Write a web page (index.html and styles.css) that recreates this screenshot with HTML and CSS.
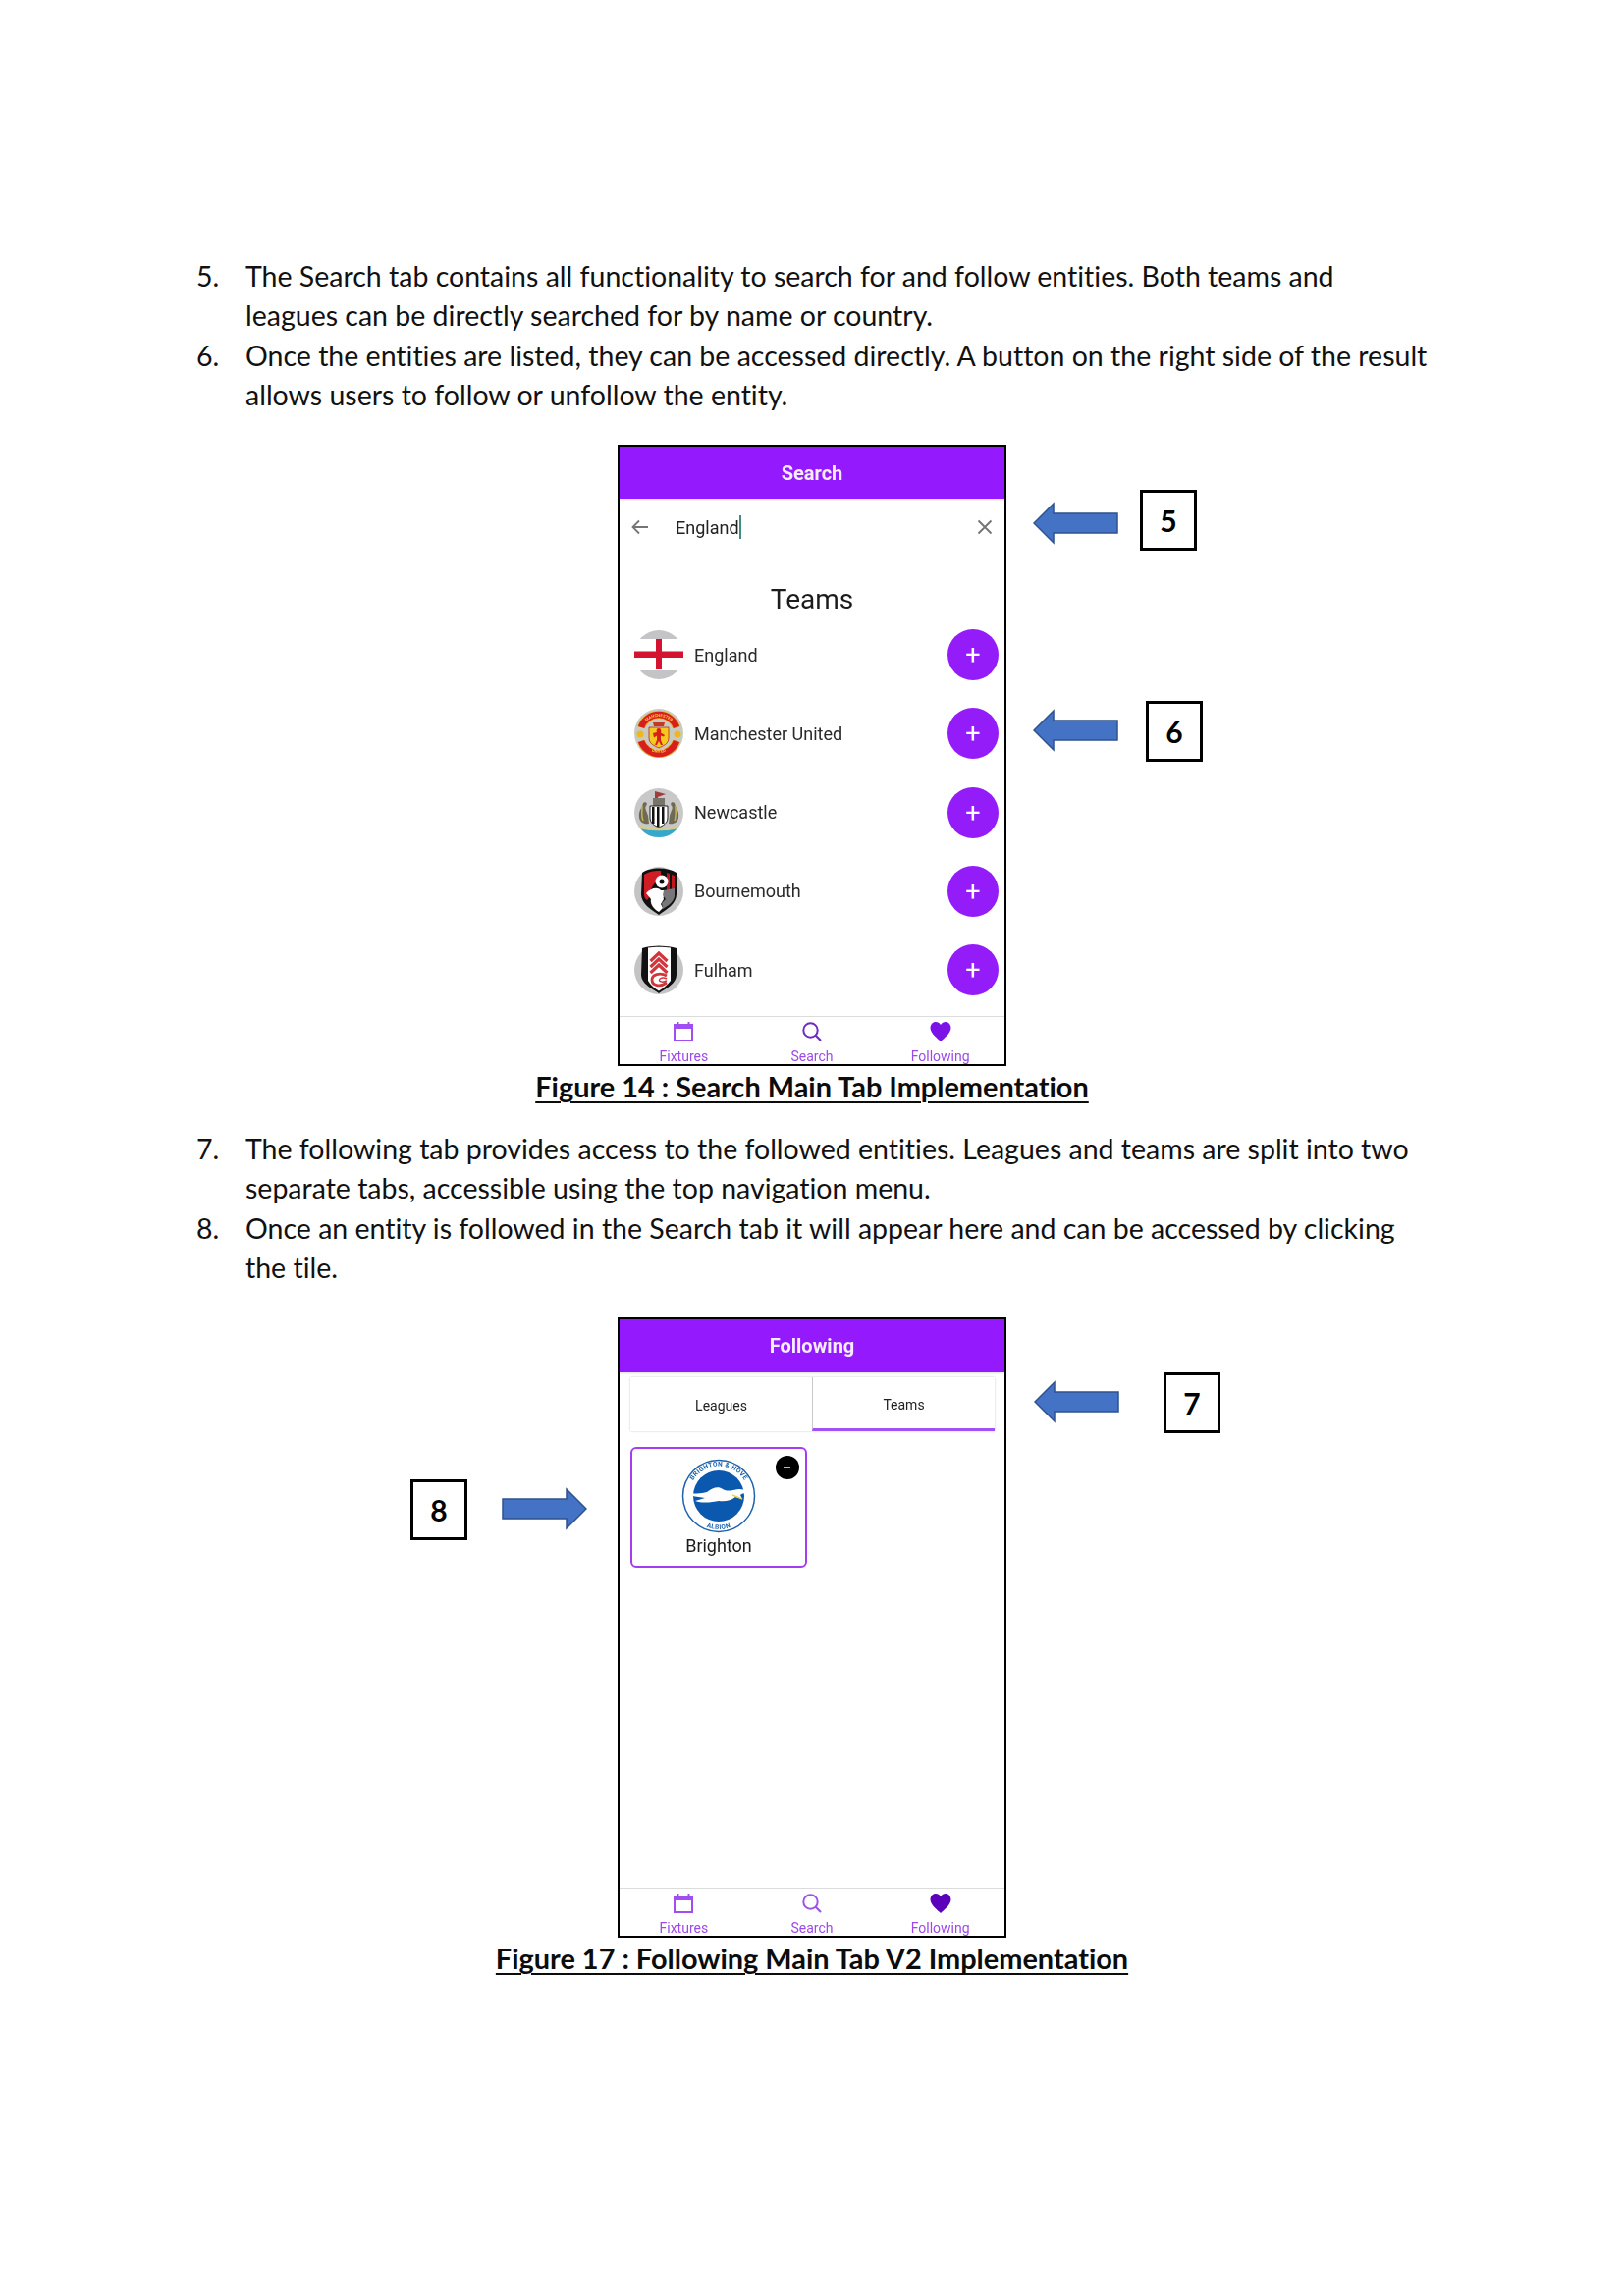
FILE: index.html
```html
<!DOCTYPE html>
<html lang="en">
<head>
    <meta charset="UTF-8">
    <meta name="viewport" content="width=device-width, initial-scale=1.0">
    <title>Search and Following Tabs</title>
    <link rel="stylesheet" href="styles.css">
</head>
<body>

    <div class="page">

        <ol class="steps">
            <li><span class="num">5.</span><p>The Search tab contains all functionality to search for and follow entities. Both teams and<br>leagues can be directly searched for by name or country.</p></li>
            <li><span class="num">6.</span><p>Once the entities are listed, they can be accessed directly. A button on the right side of the result<br>allows users to follow or unfollow the entity.</p></li>
        </ol>

        <figure class="figure">
            <div class="phone phone-search">
                <div class="app-header">Search</div>
                <div class="search-bar">
                    <svg class="bar-icon" width="18" height="16" viewBox="0 0 18 16"><path d="M17 8H2M8 1.5 1.5 8 8 14.5" fill="none" stroke="#757575" stroke-width="1.8"/></svg>
                    <span class="search-text">England</span><span class="caret"></span>
                    <svg class="close-icon" width="16" height="16" viewBox="0 0 16 16"><path d="M1.5 1.5 14.5 14.5M14.5 1.5 1.5 14.5" fill="none" stroke="#757575" stroke-width="1.9"/></svg>
                </div>
                <h3 class="list-title">Teams</h3>
                <div class="team-list">
                    <div class="team-row">
                        <svg class="crest" viewBox="0 0 50 50">
                            <circle cx="25" cy="25" r="25" fill="#c4c4c6"/>
                            <rect y="9" width="50" height="32" fill="#fff"/>
                            <rect x="0" y="21.500" width="50" height="6.500" fill="#d3132f"/>
                            <rect x="22" y="9" width="6" height="31" fill="#d3132f"/>
                        </svg>
                        <span class="team-name">England</span>
                        <span class="add-btn">+</span>
                    </div>
                    <div class="team-row">
                        <svg class="crest" viewBox="0 0 50 50">
                            <defs>
                                <path id="mu-top" d="M8 20A18 18 0 0 1 42 20"/>
                                <path id="mu-bottom" d="M6 32A20.500 20.500 0 0 0 44 32"/>
                            </defs>
                            <circle cx="25" cy="25" r="25" fill="#c9cabf"/>
                            <path d="M7 19A19 19 0 0 1 43 19" fill="none" stroke="#e8b41e" stroke-width="8"/>
                            <path d="M7 33A19 19 0 0 0 43 33" fill="none" stroke="#e8b41e" stroke-width="8"/>
                            <path d="M7 19A19 19 0 0 1 43 19" fill="none" stroke="#d81f1c" stroke-width="6.500"/>
                            <path d="M7 33A19 19 0 0 0 43 33" fill="none" stroke="#d81f1c" stroke-width="6.500"/>
                            <circle cx="6" cy="26" r="3.500" fill="#efb71e"/>
                            <circle cx="44" cy="26" r="3.500" fill="#efb71e"/>
                            <path d="M15 19H35V30C35 36 29 38 25 40 21 38 15 36 15 30Z" fill="#f4c81c" stroke="#b8281c" stroke-width=".8"/>
                            <path d="M19 14H31L30 18H20Z" fill="#c23a22"/>
                            <path d="M25 20C27.500 20 27.500 23 27 24.500L31 27 30 28.500 27 27.500V32L29 37H27L25 33 23 37H21L23 32V27.500L20 29.500 19 25 23 24C22 22 23 20 25 20Z" fill="#d81f1c"/>
                            <text class="mu-text"><textPath href="#mu-top" startOffset="50%" text-anchor="middle">MANCHESTER</textPath></text>
                            <text class="mu-text"><textPath href="#mu-bottom" startOffset="50%" text-anchor="middle">UNITED</textPath></text>
                        </svg>
                        <span class="team-name">Manchester United</span>
                        <span class="add-btn">+</span>
                    </div>
                    <div class="team-row">
                        <svg class="crest" viewBox="0 0 50 50">
                            <circle cx="25" cy="25" r="25" fill="#c8c8c8"/>
                            <path d="M6 40C14 44 36 44 44 40 40 47 32 50 25 50 18 50 10 47 6 40Z" fill="#36a8cc"/>
                            <path d="M5 37C14 41 36 41 45 37L44 41C36 44 14 44 6 41Z" fill="#d8cc8c"/>
                            <path d="M21 3 32 6 24 9V14H21Z" fill="#a03c3c"/>
                            <rect x="19" y="10" width="12" height="9" fill="#77746c"/>
                            <path d="M16 18H34V30C34 36 29 38 25 40 21 38 16 36 16 30Z" fill="#fff" stroke="#222" stroke-width="1"/>
                            <path d="M18 19H20.500V36H18ZM23 19H25.500V39H23ZM28 19H30.500V36H28Z" fill="#111"/>
                            <path d="M5 30C4 22 8 21 9 15 12 13 14 16 12 18 10 20 13 24 14 28L15 36C10 37 6 35 5 30Z" fill="#6e6a55"/>
                            <path d="M45 30C46 22 42 21 41 15 38 13 36 16 38 18 40 20 37 24 36 28L35 36C40 37 44 35 45 30Z" fill="#6e6a55"/>
                            <path d="M8 18C8 24 7 28 9 33M42 18C42 24 43 28 41 33" fill="none" stroke="#c9b45a" stroke-width="1.500"/>
                        </svg>
                        <span class="team-name">Newcastle</span>
                        <span class="add-btn">+</span>
                    </div>
                    <div class="team-row">
                        <svg class="crest" viewBox="0 0 50 50">
                            <circle cx="25" cy="25" r="25" fill="#c4c4c4"/>
                            <path d="M8 6C16 0 34 0 43 6V28C43 38 32 44 25 49 18 44 7 38 7 28Z" fill="#111"/>
                            <path d="M10 8C16 4 22 4 27 4V12C20 16 16 22 16 30L13 34C10 32 10 30 10 28Z" fill="#d01c24"/>
                            <path d="M33 6 36 7V26H33ZM38 8 41 9V24H38Z" fill="#c0161e"/>
                            <circle cx="28" cy="15" r="6.500" fill="#fff"/>
                            <circle cx="28" cy="15" r="2.500" fill="#111"/>
                            <path d="M12 27C16 22 24 20 27 24L34 24C35 30 28 28 30 33L27 38 29 42 25 46C18 42 16 36 17 33Z" fill="#fff"/>
                            <path d="M30 24 41 22V30C40 36 34 40 29 43L28 37 32 33 29 29Z" fill="#77777a"/>
                        </svg>
                        <span class="team-name">Bournemouth</span>
                        <span class="add-btn">+</span>
                    </div>
                    <div class="team-row">
                        <svg class="crest" viewBox="0 0 50 50">
                            <circle cx="25" cy="25" r="25" fill="#c4c4c4"/>
                            <path d="M8 3C16 0 34 0 43 3V30C43 39 32 44 25 49 18 44 7 39 7 30Z" fill="#111"/>
                            <path d="M14 2.500C20 1.500 30 1.500 37 2.500V36C33 41 29 44 25 46.500 21 44 17 41 14 36Z" fill="#fff"/>
                            <path d="M16.500 16 25 8 33.500 16M16.500 22 25 14 33.500 22M16.500 28 25 20 33.500 28" fill="none" stroke="#d0363c" stroke-width="3.200"/>
                            <path d="M33 31C26 27 18 30 18 35 18 41 26 43 33 38" fill="none" stroke="#d0363c" stroke-width="2.800"/>
                            <path d="M33 34C29 32 25.500 33.500 25.500 35.500 25.500 37 29 38 33 36" fill="none" stroke="#d0363c" stroke-width="1.500"/>
                        </svg>
                        <span class="team-name">Fulham</span>
                        <span class="add-btn">+</span>
                    </div>
                </div>
                <nav class="bottom-nav">
                    <div class="nav-item">
                        <svg width="22" height="20" viewBox="0 0 22 20"><path d="M2 3H20V19H2Z" fill="none" stroke="#a04df2" stroke-width="2"/><path d="M1 2H21V7H1Z" fill="#a04df2"/><path d="M5.500 0V3M16.500 0V3" stroke="#a04df2" stroke-width="2"/></svg>
                        <span>Fixtures</span>
                    </div>
                    <div class="nav-item">
                        <svg width="22" height="20" viewBox="0 0 22 20"><circle cx="9.500" cy="8.500" r="7.200" fill="none" stroke="#6c2cc4" stroke-width="2"/><path d="M14.500 13.500 20 19" stroke="#6c2cc4" stroke-width="2.200"/></svg>
                        <span>Search</span>
                    </div>
                    <div class="nav-item">
                        <svg width="22" height="20" viewBox="0 0 22 20"><path d="M11 20C8 17 1 12 .5 6.500.5 2.500 3 0 6 0 8 0 10 1 11 3 12 1 14 0 16 0 19 0 21.500 2.500 21.500 6.500 21 12 14 17 11 20Z" fill="#7b12e6"/></svg>
                        <span>Following</span>
                    </div>
                </nav>
            </div>

            <figcaption class="caption">Figure 14 : Search Main Tab Implementation</figcaption>

            <div class="callout" id="callout-5">
                <svg class="arrow" width="88" height="44" viewBox="0 0 88 44"><path d="M1 22 21 2V12H86V32H21V42Z" fill="#4472c4" stroke="#2f528f" stroke-width="1.500"/></svg>
                <div class="num-box">5</div>
            </div>
            <div class="callout" id="callout-6">
                <svg class="arrow arrow-raised" width="88" height="44" viewBox="0 0 88 44"><path d="M1 22 21 2V12H86V32H21V42Z" fill="#4472c4" stroke="#2f528f" stroke-width="1.500"/></svg>
                <div class="num-box">6</div>
            </div>
        </figure>

        <ol class="steps steps-second">
            <li><span class="num">7.</span><p>The following tab provides access to the followed entities. Leagues and teams are split into two<br>separate tabs, accessible using the top navigation menu.</p></li>
            <li><span class="num">8.</span><p>Once an entity is followed in the Search tab it will appear here and can be accessed by clicking<br>the tile.</p></li>
        </ol>

        <figure class="figure">
            <div class="phone phone-following">
                <div class="app-header">Following</div>
                <div class="tabs">
                    <div class="tab">Leagues</div>
                    <div class="tab tab-active">Teams</div>
                </div>
                <div class="tile">
                    <span class="remove-btn"></span>
                    <svg class="tile-crest" viewBox="0 0 76 76">
                        <defs>
                            <path id="ring-top" d="M7.500 38A30.500 30.500 0 0 1 68.500 38"/>
                            <path id="ring-bottom" d="M4 38A34 34 0 0 0 72 38"/>
                        </defs>
                        <circle cx="38" cy="38" r="36.500" fill="#fff" stroke="#1d62ac" stroke-width="1.500"/>
                        <circle cx="38" cy="38" r="26" fill="#0a59ae"/>
                        <text class="crest-text"><textPath href="#ring-top" startOffset="50%" text-anchor="middle">BRIGHTON &amp; HOVE</textPath></text>
                        <text class="crest-text"><textPath href="#ring-bottom" startOffset="50%" text-anchor="middle">ALBION</textPath></text>
                        <path d="M3 36C12 35 20 36 26 34 32 29 38 28 42 31 47 34 52 32 58 31 62 31 68 32 72 36 66 34 62 35 60 37L62 41 55 39C50 43 44 44 38 43 32 44 22 46 14 43L24 40C18 39 10 38 3 36Z" fill="#fff"/>
                        <path d="M52 37 62 41" stroke="#e8d44c" stroke-width="1.500"/>
                    </svg>
                    <span class="tile-name">Brighton</span>
                </div>
                <nav class="bottom-nav">
                    <div class="nav-item">
                        <svg width="22" height="20" viewBox="0 0 22 20"><path d="M2 3H20V19H2Z" fill="none" stroke="#a04df2" stroke-width="2"/><path d="M1 2H21V7H1Z" fill="#a04df2"/><path d="M5.500 0V3M16.500 0V3" stroke="#a04df2" stroke-width="2"/></svg>
                        <span>Fixtures</span>
                    </div>
                    <div class="nav-item">
                        <svg width="22" height="20" viewBox="0 0 22 20"><circle cx="9.500" cy="8.500" r="7.200" fill="none" stroke="#9a55e6" stroke-width="2"/><path d="M14.500 13.500 20 19" stroke="#9a55e6" stroke-width="2.200"/></svg>
                        <span>Search</span>
                    </div>
                    <div class="nav-item">
                        <svg width="22" height="20" viewBox="0 0 22 20"><path d="M11 20C8 17 1 12 .5 6.500.5 2.500 3 0 6 0 8 0 10 1 11 3 12 1 14 0 16 0 19 0 21.500 2.500 21.500 6.500 21 12 14 17 11 20Z" fill="#5b02ba"/></svg>
                        <span>Following</span>
                    </div>
                </nav>
            </div>

            <figcaption class="caption">Figure 17 : Following Main Tab V2 Implementation</figcaption>

            <div class="callout" id="callout-7">
                <svg class="arrow arrow-raised" width="88" height="44" viewBox="0 0 88 44"><path d="M1 22 21 2V12H86V32H21V42Z" fill="#4472c4" stroke="#2f528f" stroke-width="1.500"/></svg>
                <div class="num-box">7</div>
            </div>
            <div class="callout" id="callout-8">
                <div class="num-box">8</div>
                <svg class="arrow arrow-raised" width="88" height="44" viewBox="0 0 88 44"><path d="M87 22 67 2V12H2V32H67V42Z" fill="#4472c4" stroke="#2f528f" stroke-width="1.500"/></svg>
            </div>
        </figure>

    </div>

</body>
</html>
```

FILE: styles.css
```css
body {
    margin: 0;
    background: #fff;
    color: #111;
    font-family: Lato, "Liberation Sans", sans-serif;
    font-variant-ligatures: none;
}
.page {
    width: 1654px;
    height: 2339px;
    padding-top: 261px;
    box-sizing: border-box;
    overflow: hidden;
}
.steps {
    list-style: none;
    margin: 0 0 0 200px;
    padding: 0;
    font-size: 28.5px;
    line-height: 40.3px;
}
.steps li {
    display: flex;
}
.steps p {
    margin: 0;
    white-space: nowrap;
}
.num {
    width: 50px;
    flex-shrink: 0;
}
.steps-second {
    margin-top: 23px;
}
.figure {
    position: relative;
    margin: 31px 0 0;
}
.phone {
    width: 396px;
    height: 633px;
    margin: 0 auto;
    border: 2px solid #000;
    box-sizing: border-box;
    display: flex;
    flex-direction: column;
    font-family: Roboto, sans-serif;
    color: #222;
    background: #fff;
    filter: blur(.35px);
}
.phone-following {
    height: 632px;
}
.app-header {
    height: 53px;
    flex-shrink: 0;
    background: #9419fd;
    color: #f6ecff;
    font-size: 20px;
    font-weight: 700;
    display: flex;
    align-items: center;
    justify-content: center;
    box-shadow: 0 1px 2px rgba(0, 0, 0, .15);
}
.phone-following .app-header {
    height: 54px;
}
.search-bar {
    height: 58px;
    flex-shrink: 0;
    display: flex;
    align-items: center;
    padding: 0 12px;
    font-size: 18px;
}
.bar-icon {
    margin-right: 27px;
}
.caret {
    width: 2px;
    height: 24px;
    background: #3b8f86;
}
.close-icon {
    margin-left: auto;
}
.list-title {
    height: 34px;
    margin: 28px 0 -1px;
    font-size: 28px;
    font-weight: 400;
    line-height: 34px;
    text-align: center;
    color: #1c1c1c;
}
.team-row {
    height: 80.2px;
    display: flex;
    align-items: center;
    padding: 0 6px 0 15px;
}
.crest {
    width: 50px;
    height: 50px;
    flex-shrink: 0;
    margin-right: 11px;
}
.mu-text {
    font-size: 4.2px;
    font-weight: 700;
    fill: #f5d24a;
}
.team-name {
    font-size: 18px;
    color: #2a2a2a;
}
.add-btn {
    width: 52px;
    height: 52px;
    margin-left: auto;
    border-radius: 50%;
    background: #931cf9;
    color: #fff;
    font-size: 27px;
    line-height: 52px;
    text-align: center;
}
.bottom-nav {
    margin-top: auto;
    height: 48px;
    flex-shrink: 0;
    border-top: 1px solid #dcdcdc;
    display: grid;
    grid-template-columns: repeat(3, 1fr);
}
.nav-item {
    display: flex;
    flex-direction: column;
    align-items: center;
    padding-top: 5px;
    color: #9c4be8;
    font-size: 14px;
    line-height: 16px;
    gap: 7px;
}
.tabs {
    display: flex;
    height: 55px;
    margin: 5px 10px 0 11px;
    flex-shrink: 0;
    box-shadow: 0 0 2px rgba(0, 0, 0, .22);
    font-size: 14px;
    color: #222;
}
.tab {
    flex: 1;
    display: flex;
    align-items: center;
    justify-content: center;
    padding-top: 3px;
}
.tab-active {
    border-left: 1px solid #c9c9c9;
    border-bottom: 3px solid #a251f5;
}
.tile {
    position: relative;
    width: 180px;
    height: 123px;
    margin: 16px 0 0 11px;
    border: 2.5px solid #a33df2;
    border-radius: 6px;
    box-sizing: border-box;
    display: flex;
    flex-direction: column;
    align-items: center;
    padding-top: 10px;
}
.tile-crest {
    width: 76px;
    height: 76px;
    flex-shrink: 0;
}
.crest-text {
    font-family: Roboto, sans-serif;
    font-size: 6.5px;
    font-weight: 700;
    letter-spacing: .4px;
    fill: #1d62ac;
}
.tile-name {
    margin-top: 2px;
    font-size: 18px;
    line-height: 22px;
    color: #1c1c1c;
}
.remove-btn {
    position: absolute;
    top: 6.500px;
    right: 6px;
    width: 24px;
    height: 24px;
    border-radius: 50%;
    background: #000;
}
.remove-btn::after {
    content: "";
    position: absolute;
    left: 8px;
    top: 11px;
    width: 7px;
    height: 2px;
    background: #bbb;
}
.caption {
    margin: 0;
    height: 41px;
    font-size: 28.9px;
    line-height: 41px;
    font-weight: 700;
    text-align: center;
    text-decoration: underline;
    text-decoration-thickness: 2px;
    text-underline-offset: 4px;
    color: #0c0c0c;
}
.callout {
    position: absolute;
    display: flex;
    align-items: flex-start;
}
#callout-5 {
    left: 1052px;
    top: 46px;
    gap: 21px;
}
#callout-6 {
    left: 1052px;
    top: 261px;
    gap: 27px;
}
#callout-7 {
    left: 1053px;
    top: 56px;
    gap: 44px;
}
#callout-8 {
    left: 418px;
    top: 165px;
    gap: 34px;
}
.arrow {
    margin-top: 12px;
}
.arrow-raised {
    margin-top: 8px;
}
.num-box {
    width: 58px;
    height: 62px;
    border: 3px solid #000;
    box-sizing: border-box;
    display: flex;
    align-items: center;
    justify-content: center;
    font-size: 30px;
    font-weight: 700;
    color: #000;
}
```
